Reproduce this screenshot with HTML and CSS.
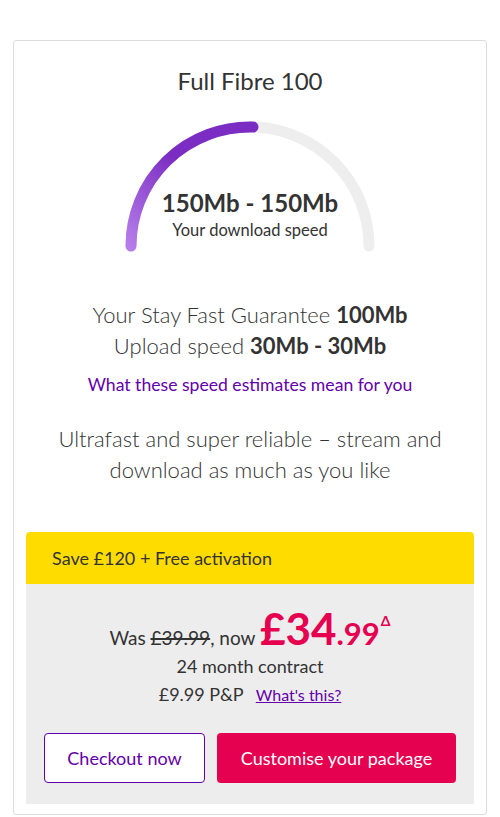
FILE: index.html
```html
<!DOCTYPE html>
<html lang="en">
<head>
    <meta charset="UTF-8">
    <meta name="viewport" content="width=device-width, initial-scale=1.0">
    <title>Full Fibre 100</title>
    <link rel="stylesheet" href="styles.css">
</head>
<body>
    <div class="card">
        <h2 class="title">Full Fibre 100</h2>

        <div class="gauge">
            <svg class="gauge-svg" width="260" height="132" viewBox="0 0 260 132">
                <defs>
                    <linearGradient id="speedGrad" x1="0" y1="1" x2="1" y2="0">
                        <stop offset="0" stop-color="#b57de9"/>
                        <stop offset="0.55" stop-color="#7b2cc2"/>
                    </linearGradient>
                </defs>
                <path d="M 11 125 A 119 119 0 0 1 249 125" fill="none" stroke="#eeeeee" stroke-width="11" stroke-linecap="round"/>
                <path d="M 11 125 A 119 119 0 0 1 133 6.04" fill="none" stroke="url(#speedGrad)" stroke-width="11" stroke-linecap="round"/>
            </svg>
            <div class="gauge-text">
                <div class="gauge-speed">150Mb - 150Mb</div>
                <div class="gauge-label">Your download speed</div>
            </div>
        </div>

        <p class="speeds">
            Your Stay Fast Guarantee <strong>100Mb</strong><br>
            Upload speed <strong>30Mb - 30Mb</strong>
        </p>

        <a class="estimates" href="#">What these speed estimates mean for you</a>

        <p class="blurb">Ultrafast and super reliable &ndash; stream and download as much as you like</p>

        <div class="offer">
            <div class="offer-banner">Save £120 + Free activation</div>
            <div class="offer-body">
                <div class="price-row">
                    Was <s class="was">£39.99</s>, now <span class="price">£34<span class="pence">.99</span><sup class="delta">Δ</sup></span>
                </div>
                <div class="contract">24 month contract</div>
                <div class="postage">£9.99 P&amp;P <a href="#" class="whats">What's this?</a></div>
                <div class="actions">
                    <button class="btn btn-outline">Checkout now</button>
                    <button class="btn btn-primary">Customise your package</button>
                </div>
            </div>
        </div>
    </div>
</body>
</html>
```

FILE: styles.css
```css
body {
    margin: 0;
    padding: 40px 13px 0;
    font-family: Lato, "Open Sans", sans-serif;
    color: #333;
    background: #fff;
}
.card {
    border: 1px solid #ddd;
    border-radius: 3px;
    padding: 0 12px 10px;
    text-align: center;
}
.title {
    margin: 25px 0 0;
    font-size: 24px;
    line-height: 30px;
    font-weight: 400;
}
.gauge {
    position: relative;
    width: 260px;
    height: 132px;
    margin: 25px auto 0;
}
.gauge-svg {
    display: block;
}
.gauge-text {
    position: absolute;
    left: 0;
    right: 0;
    top: 68px;
}
.gauge-speed {
    font-size: 24px;
    line-height: 28px;
    font-weight: 700;
}
.gauge-label {
    font-size: 16.5px;
    line-height: 26px;
}
.speeds {
    margin: 46px 0 0;
    font-size: 22px;
    line-height: 31px;
    font-weight: 300;
}
.speeds strong {
    font-weight: 700;
}
.estimates {
    display: block;
    margin-top: 12px;
    font-size: 17.6px;
    line-height: 24px;
    color: #6400aa;
    text-decoration: none;
}
.blurb {
    margin: 26px 20px 0;
    font-size: 22px;
    line-height: 31px;
    font-weight: 300;
}
.offer {
    margin-top: 47px;
    border-radius: 4px 4px 0 0;
    overflow: hidden;
}
.offer-banner {
    background: #ffdc00;
    height: 52px;
    line-height: 52px;
    padding-left: 26px;
    text-align: left;
    font-size: 18px;
}
.offer-body {
    background: #ededed;
    padding: 15px 18px 21px;
}
.price-row {
    font-size: 19px;
    line-height: 44px;
}
.was {
    text-decoration-thickness: 2px;
}
.price {
    color: #e60050;
    font-size: 44px;
    font-weight: 700;
}
.pence {
    font-size: 31px;
}
.delta {
    font-size: 14px;
    font-weight: 700;
    vertical-align: 19px;
    margin-left: 1px;
}
.contract {
    margin-top: -6px;
    font-size: 18px;
    line-height: 24px;
}
.postage {
    margin-top: 4px;
    font-size: 18px;
    line-height: 24px;
}
.whats {
    margin-left: 8px;
    font-size: 16px;
    color: #6400aa;
}
.actions {
    display: flex;
    gap: 12px;
    margin-top: 26px;
}
.btn {
    height: 50px;
    border-radius: 4px;
    font-family: inherit;
    font-size: 18px;
    cursor: pointer;
}
.btn-outline {
    width: 161px;
    background: #fff;
    color: #6400aa;
    border: 1px solid #6400aa;
}
.btn-primary {
    flex: 1;
    background: #e60050;
    color: #fff;
    border: none;
}
```
